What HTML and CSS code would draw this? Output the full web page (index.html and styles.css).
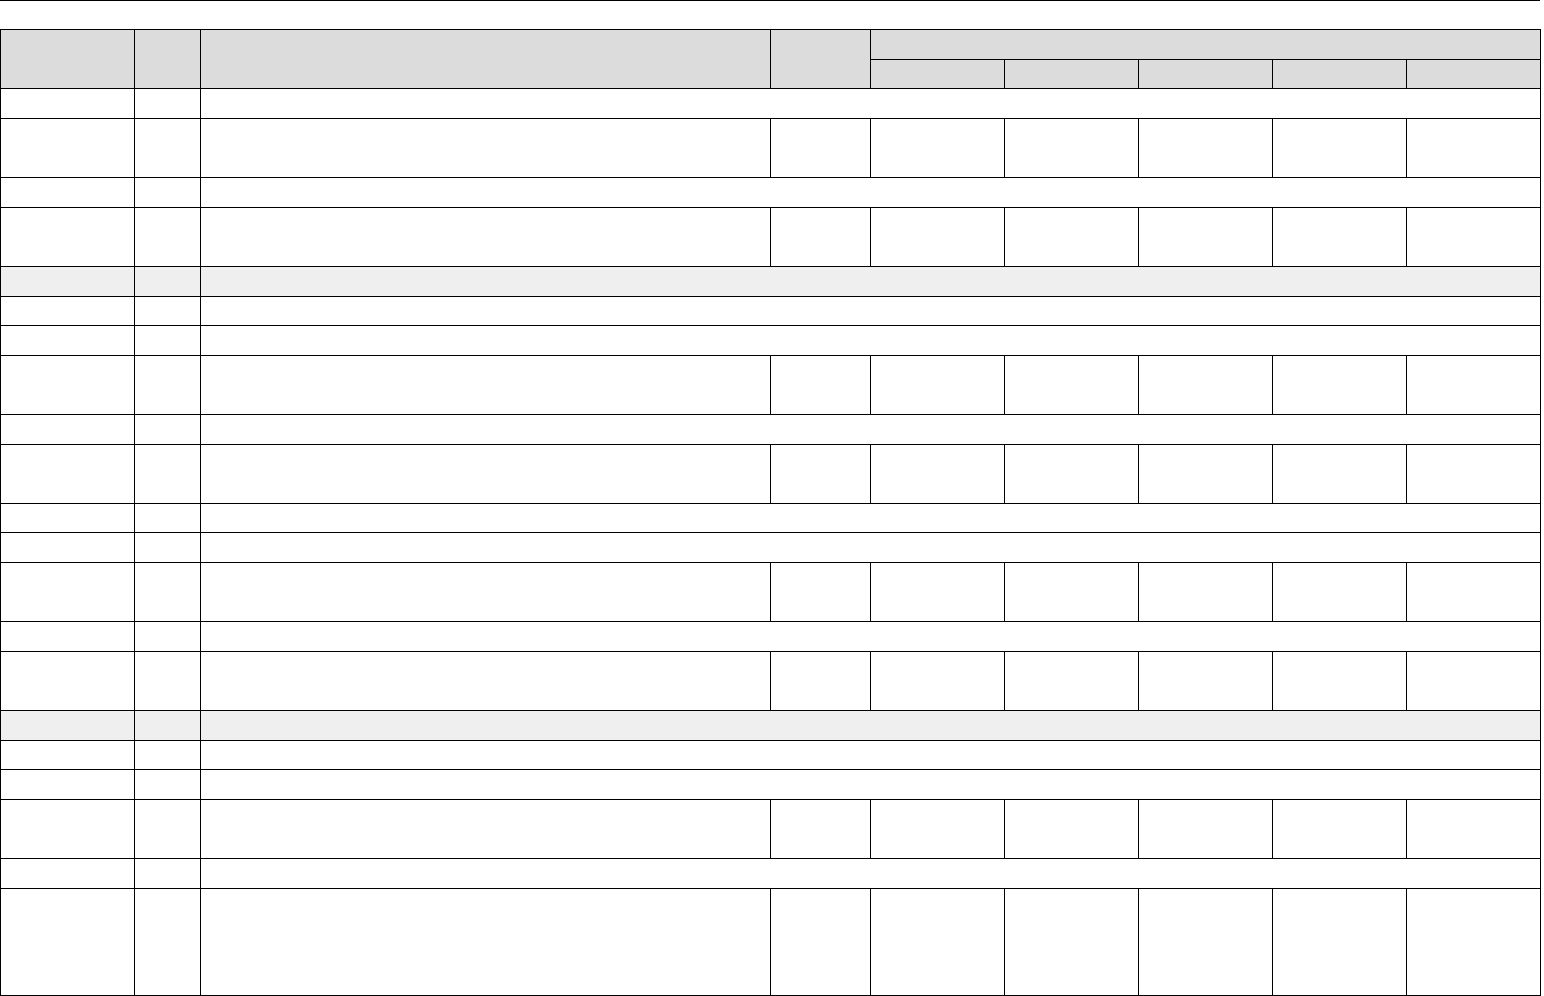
FILE: index.html
```html
<!DOCTYPE html>
<html lang="en">
<head>
<meta charset="utf-8">
<title>Table</title>
<link rel="stylesheet" href="styles.css">
</head>
<body>
<div class="topline"></div>
<table class="grid">
<colgroup>
<col class="c1"><col class="c2"><col class="c3"><col class="c4">
<col class="c5"><col class="c5"><col class="c5"><col class="c5"><col class="c9">
</colgroup>
<thead>
<tr class="h30"><th rowspan="2"></th><th rowspan="2"></th><th rowspan="2"></th><th rowspan="2"></th><th colspan="5"></th></tr>
<tr class="h29"><th></th><th></th><th></th><th></th><th></th></tr>
</thead>
<tbody>
<tr class="h30"><td></td><td></td><td colspan="7"></td></tr>
<tr class="h59"><td></td><td></td><td></td><td></td><td></td><td></td><td></td><td></td><td></td></tr>
<tr class="h30"><td></td><td></td><td colspan="7"></td></tr>
<tr class="h59"><td></td><td></td><td></td><td></td><td></td><td></td><td></td><td></td><td></td></tr>
<tr class="h30 shade"><td></td><td></td><td colspan="7"></td></tr>
<tr class="h29"><td></td><td></td><td colspan="7"></td></tr>
<tr class="h30"><td></td><td></td><td colspan="7"></td></tr>
<tr class="h59"><td></td><td></td><td></td><td></td><td></td><td></td><td></td><td></td><td></td></tr>
<tr class="h30"><td></td><td></td><td colspan="7"></td></tr>
<tr class="h59"><td></td><td></td><td></td><td></td><td></td><td></td><td></td><td></td><td></td></tr>
<tr class="h29"><td></td><td></td><td colspan="7"></td></tr>
<tr class="h30"><td></td><td></td><td colspan="7"></td></tr>
<tr class="h59"><td></td><td></td><td></td><td></td><td></td><td></td><td></td><td></td><td></td></tr>
<tr class="h30"><td></td><td></td><td colspan="7"></td></tr>
<tr class="h59"><td></td><td></td><td></td><td></td><td></td><td></td><td></td><td></td><td></td></tr>
<tr class="h30 shade"><td></td><td></td><td colspan="7"></td></tr>
<tr class="h29"><td></td><td></td><td colspan="7"></td></tr>
<tr class="h30"><td></td><td></td><td colspan="7"></td></tr>
<tr class="h59"><td></td><td></td><td></td><td></td><td></td><td></td><td></td><td></td><td></td></tr>
<tr class="h30"><td></td><td></td><td colspan="7"></td></tr>
<tr class="h107"><td></td><td></td><td></td><td></td><td></td><td></td><td></td><td></td><td></td></tr>
</tbody>
</table>
</body>
</html>
```
FILE: styles.css
```css
html, body {
  margin: 0;
  padding: 0;
  background: #ffffff;
  font-family: "Liberation Sans", Arial, sans-serif;
  font-size: 12px;
}

.topline {
  width: 1540px;
  height: 0;
  border-top: 1px solid #000000;
  margin-bottom: 28px;
}

.grid {
  width: 1540px;
  border-collapse: collapse;
  table-layout: fixed;
}

.grid th,
.grid td {
  border: 1px solid #000000;
  padding: 0;
}

.grid th {
  background: #dcdcdc;
}

.shade td {
  background: #efefef;
}

.c1 { width: 134px; }
.c2 { width: 66px; }
.c3 { width: 570px; }
.c4 { width: 100px; }
.c5 { width: 134px; }
.c9 { width: 134px; }

.h29 { height: 29px; }
.h30 { height: 30px; }
.h59 { height: 59px; }
.h107 { height: 107px; }
```
